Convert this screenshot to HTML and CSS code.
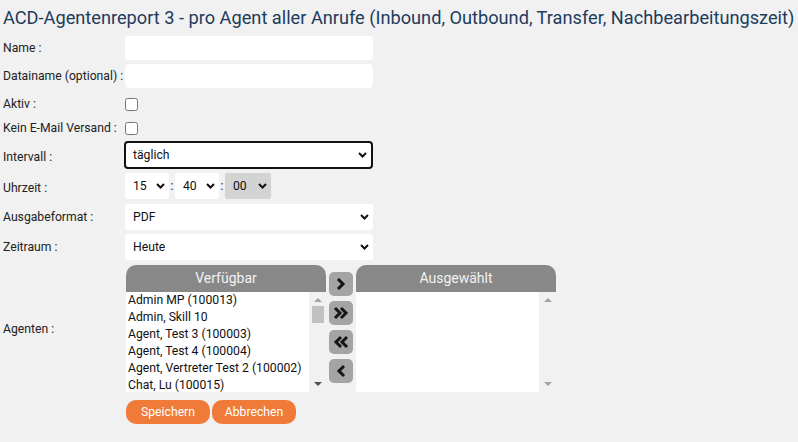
FILE: index.html
```html
<!DOCTYPE html>
<html lang="de">
<head>
<meta charset="utf-8">
<title>ACD-Agentenreport 3</title>
<link rel="stylesheet" href="styles.css">
</head>
<body>
<h1 class="title">ACD-Agentenreport 3 - pro Agent aller Anrufe (Inbound, Outbound, Transfer, Nachbearbeitungszeit)</h1>
<form class="form">
  <div class="row r-name">
    <label class="lbl">Name :</label>
    <input class="txt" type="text">
  </div>
  <div class="row r-data">
    <label class="lbl">Datainame (optional) :</label>
    <input class="txt" type="text">
  </div>
  <div class="row r-check">
    <label class="lbl">Aktiv :</label>
    <input class="chk" type="checkbox">
  </div>
  <div class="row r-check2">
    <label class="lbl">Kein E-Mail Versand :</label>
    <input class="chk" type="checkbox">
  </div>
  <div class="row r-int">
    <label class="lbl">Intervall :</label>
    <select class="sel sel-focus"><option>täglich</option></select>
  </div>
  <div class="row r-time">
    <label class="lbl">Uhrzeit :</label>
    <div class="time">
      <select class="sel sel-t"><option>15</option></select>
      <span class="colon">:</span>
      <select class="sel sel-t"><option>40</option></select>
      <span class="colon">:</span>
      <select class="sel sel-t sel-hover"><option>00</option></select>
    </div>
  </div>
  <div class="row r-fmt">
    <label class="lbl">Ausgabeformat :</label>
    <select class="sel"><option>PDF</option></select>
  </div>
  <div class="row r-zeit">
    <label class="lbl">Zeitraum :</label>
    <select class="sel"><option>Heute</option></select>
  </div>
  <div class="row r-agents">
    <label class="lbl">Agenten :</label>
    <div class="dual">
      <div class="box box-left">
        <div class="box-head">Verfügbar</div>
        <div class="box-body">
          <ul class="items">
            <li>Admin MP (100013)</li>
            <li>Admin, Skill 10</li>
            <li>Agent, Test 3 (100003)</li>
            <li>Agent, Test 4 (100004)</li>
            <li>Agent, Vertreter Test 2 (100002)</li>
            <li>Chat, Lu (100015)</li>
          </ul>
          <div class="sbar">
            <span class="arr arr-up"></span>
            <span class="thumb"></span>
            <span class="arr arr-down dark"></span>
          </div>
        </div>
      </div>
      <div class="moves">
        <button type="button" class="mv"><svg width="12" height="14" viewBox="0 0 12 14"><path d="M3 2l5 5-5 5" fill="none" stroke="#151515" stroke-width="3"/></svg></button>
        <button type="button" class="mv"><svg width="16" height="14" viewBox="0 0 16 14"><path d="M2 2l5 5-5 5M8 2l5 5-5 5" fill="none" stroke="#151515" stroke-width="3"/></svg></button>
        <button type="button" class="mv"><svg width="16" height="14" viewBox="0 0 16 14"><path d="M14 2l-5 5 5 5M8 2l-5 5 5 5" fill="none" stroke="#151515" stroke-width="3"/></svg></button>
        <button type="button" class="mv"><svg width="12" height="14" viewBox="0 0 12 14"><path d="M9 2l-5 5 5 5" fill="none" stroke="#151515" stroke-width="3"/></svg></button>
      </div>
      <div class="box box-right">
        <div class="box-head">Ausgewählt</div>
        <div class="box-body">
          <ul class="items"></ul>
          <div class="sbar">
            <span class="arr arr-up"></span>
            <span class="arr arr-down"></span>
          </div>
        </div>
      </div>
    </div>
  </div>
  <div class="row r-btns">
    <span class="lbl"></span>
    <div class="btns">
      <button type="button" class="btn">Speichern</button>
      <button type="button" class="btn">Abbrechen</button>
    </div>
  </div>
</form>
</body>
</html>
```
FILE: styles.css
```css
html, body {
  margin: 0;
  padding: 0;
  background: #f1f1f1;
}
body {
  padding: 0 3px;
  font-family: Roboto, "Liberation Sans", sans-serif;
  font-size: 12.2px;
  color: #222;
  height: 442px;
  overflow: hidden;
}
.title {
  margin: 6px 0 0 0;
  font-size: 18.2px;
  line-height: 24px;
  font-weight: 400;
  color: #1d3c5c;
  white-space: nowrap;
}
.form {
  display: flex;
  flex-direction: column;
}
.row {
  display: flex;
  align-items: center;
}
.lbl {
  width: 122px;
  flex: none;
  color: #222;
}
.r-name { margin-top: 6px; height: 24px; }
.r-data { margin-top: 4px; height: 24px; }
.r-check { margin-top: 4px; height: 24px; }
.r-check2 { height: 24px; }
.r-int { margin-top: 1px; height: 28px; }
.r-int .lbl { padding-top: 4px; }
.r-time { margin-top: 4px; height: 26px; }
.r-time .lbl { padding-top: 3px; }
.r-fmt { margin-top: 5px; height: 26px; }
.r-zeit { margin-top: 4px; height: 26px; }
.r-agents { margin-top: 5px; height: 127px; }
.r-btns { margin-top: 8px; height: 24px; }

.txt {
  box-sizing: border-box;
  width: 248px;
  height: 24px;
  border: none;
  border-radius: 4px;
  background: #fff;
  margin: 0;
  padding: 0 6px;
  font: inherit;
}
.chk {
  margin: 0;
  width: 13px;
  height: 13px;
}
.sel {
  appearance: none;
  -webkit-appearance: none;
  box-sizing: border-box;
  width: 248px;
  height: 26px;
  margin: 0;
  border: none;
  border-radius: 3px;
  padding: 0 0 0 8px;
  font-family: Roboto, "Liberation Sans", sans-serif;
  font-size: 12.2px;
  color: #111;
  background-color: #fff;
  background-image: url("data:image/svg+xml,%3Csvg xmlns='http://www.w3.org/2000/svg' width='9' height='6' viewBox='0 0 9 6'%3E%3Cpath d='M1 1l3.5 3.5L8 1' fill='none' stroke='%23111' stroke-width='2'/%3E%3C/svg%3E");
  background-repeat: no-repeat;
  background-position: right 4px center;
}
.sel-focus {
  width: 249px;
  height: 28px;
  margin-left: -1px;
  border: 2px solid #111;
  border-radius: 4px;
  padding-left: 7px;
}
.time {
  display: flex;
  align-items: center;
}
.sel-t {
  width: 44px;
  border-radius: 2px;
}
.sel-hover {
  width: 46px;
  background-color: #d3d3d3;
}
.colon {
  width: 6px;
  text-align: center;
  color: #222;
}

.dual {
  display: flex;
  align-items: flex-start;
  margin-left: 1px;
  gap: 3px;
}
.box {
  width: 200px;
  display: flex;
  flex-direction: column;
}
.box-head {
  height: 27px;
  line-height: 27px;
  background: #888;
  border-radius: 10px 10px 0 0;
  color: #f2f2f2;
  font-size: 14px;
  text-align: center;
}
.box-body {
  display: flex;
  height: 100px;
}
.items {
  flex: 1;
  margin: 0;
  padding: 0 0 0 2px;
  list-style: none;
  background: #fff;
  overflow: hidden;
}
.items li {
  line-height: 17px;
  white-space: nowrap;
  color: #111;
}
.sbar {
  width: 17px;
  flex: none;
  background: #f1f1f1;
  display: flex;
  flex-direction: column;
  align-items: center;
}
.arr {
  width: 0;
  height: 0;
  border-left: 4px solid transparent;
  border-right: 4px solid transparent;
}
.arr-up {
  margin-top: 6px;
  border-bottom: 4px solid #a3a3a3;
}
.arr-down {
  margin-top: auto;
  margin-bottom: 6px;
  border-top: 4px solid #a3a3a3;
}
.arr-down.dark {
  border-top-color: #505050;
}
.thumb {
  margin-top: 4px;
  width: 12px;
  height: 17px;
  background: #c1c1c1;
}
.moves {
  display: flex;
  flex-direction: column;
  gap: 5px;
  padding-top: 7px;
}
.mv {
  width: 24px;
  height: 24px;
  padding: 0;
  margin: 0;
  border: none;
  border-radius: 5px;
  background: #a4a4a4;
  display: flex;
  align-items: center;
  justify-content: center;
}
.btns {
  display: flex;
  gap: 2px;
  margin-left: 1px;
}
.btn {
  width: 84px;
  height: 24px;
  margin: 0;
  padding: 0;
  border: none;
  border-radius: 10px;
  background: #f07b38;
  color: #fff;
  font-family: Roboto, "Liberation Sans", sans-serif;
  font-size: 12.2px;
}
```
